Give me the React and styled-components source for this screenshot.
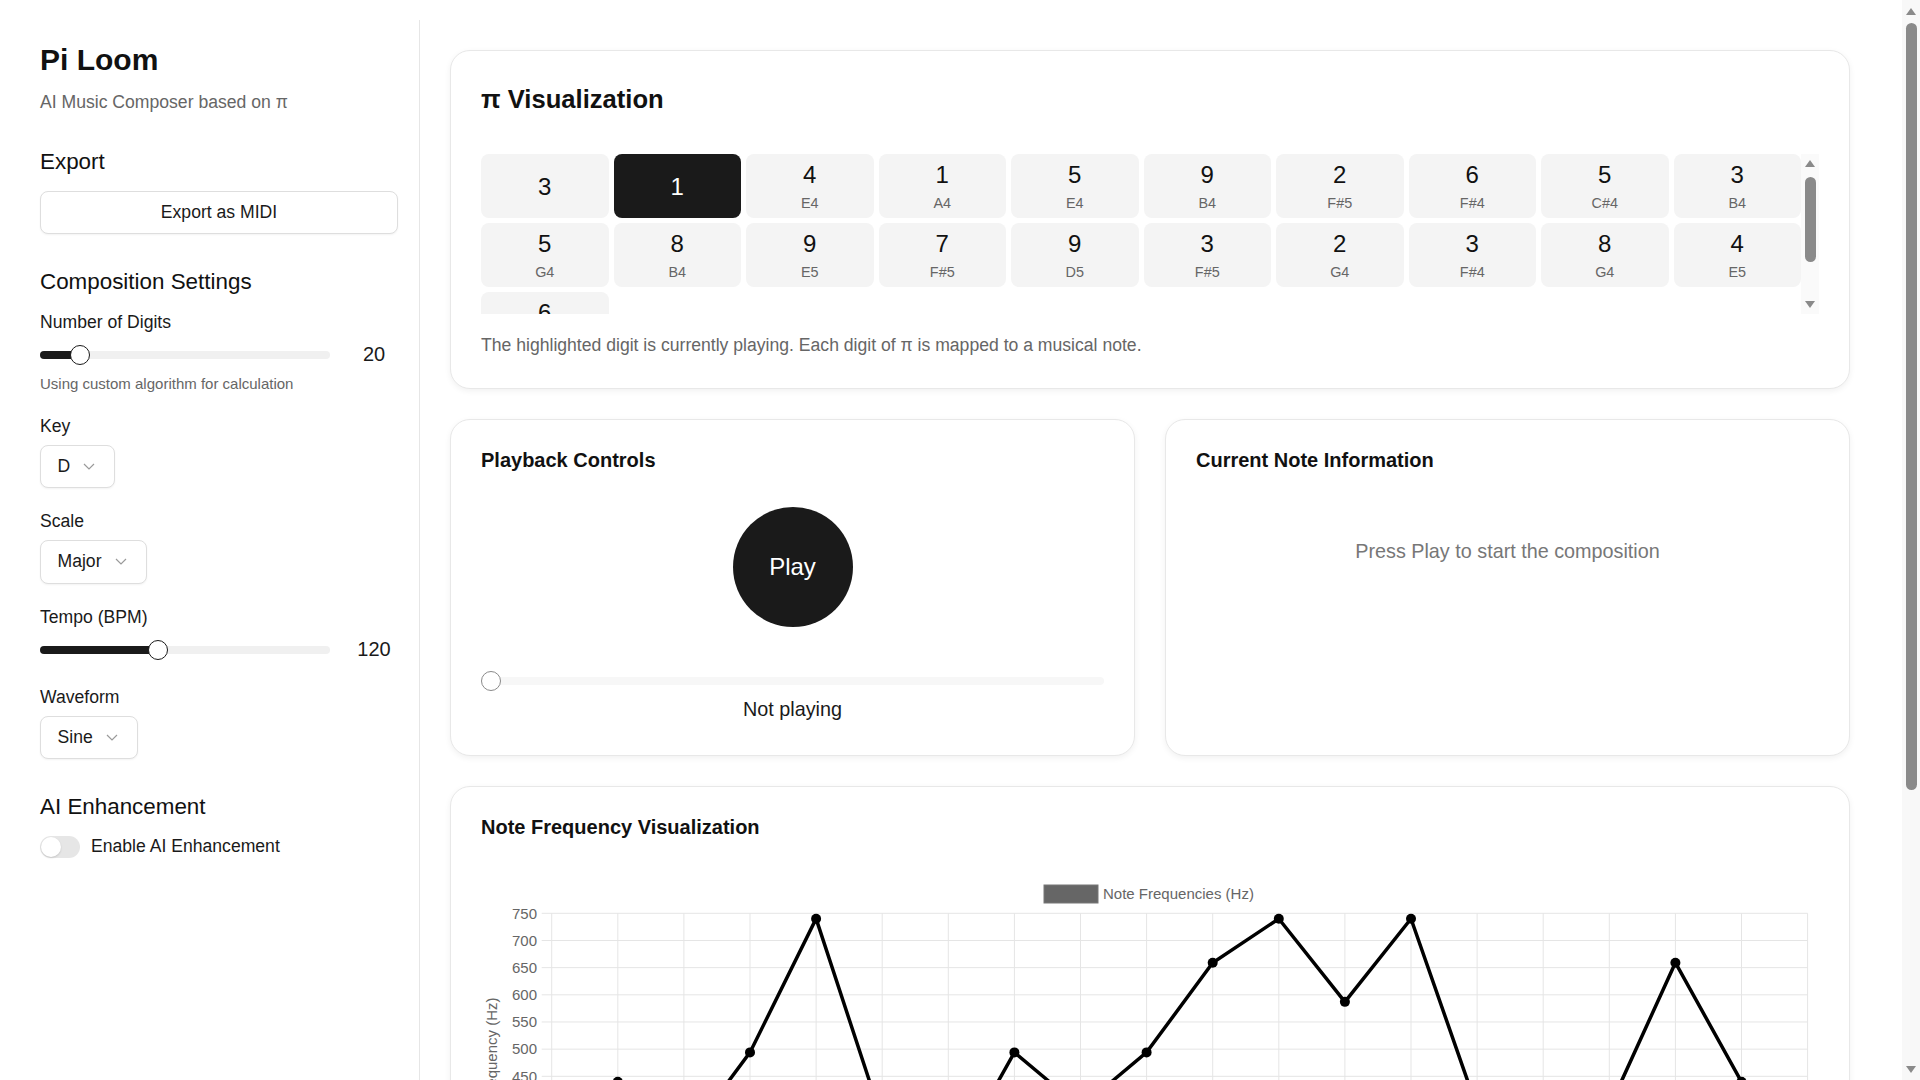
import React from 'react';
import styled, { createGlobalStyle } from 'styled-components';

const GlobalStyle = createGlobalStyle`
  html, body {
    margin: 0;
    padding: 0;
    background: #ffffff;
  }
  body {
    font-family: "Liberation Sans", Arial, sans-serif;
    font-size: 17.6px;
    color: #1a1a1a;
  }
  * {
    box-sizing: border-box;
  }
`;

const DIGITS = [
  { d: 3 },
  { d: 1, active: true },
  { d: 4, n: 'E4' },
  { d: 1, n: 'A4' },
  { d: 5, n: 'E4' },
  { d: 9, n: 'B4' },
  { d: 2, n: 'F#5' },
  { d: 6, n: 'F#4' },
  { d: 5, n: 'C#4' },
  { d: 3, n: 'B4' },
  { d: 5, n: 'G4' },
  { d: 8, n: 'B4' },
  { d: 9, n: 'E5' },
  { d: 7, n: 'F#5' },
  { d: 9, n: 'D5' },
  { d: 3, n: 'F#5' },
  { d: 2, n: 'G4' },
  { d: 3, n: 'F#4' },
  { d: 8, n: 'G4' },
  { d: 4, n: 'E5' },
  { d: 6, n: 'A4' },
];

const FREQS = [330, 440, 330, 494, 740, 370, 277, 494, 392, 494, 659, 740, 587, 740, 392, 370, 392, 659, 440, 392];

// page frame

const Page = styled.div`
  display: flex;
  align-items: flex-start;
`;

const Layout = styled.div`
  flex: 1;
  display: flex;
  padding-top: 20px;
  min-height: 100vh;
`;

// scroll rails (the reference shows classic scrollbars)

const Rail = styled.div`
  flex-shrink: 0;
  width: 18px;
  height: ${(props) => props.height};
  background: ${(props) => props.bg};
  display: flex;
  flex-direction: column;
  align-items: center;
  padding: ${(props) => props.padding};
`;

const PageRail = styled(Rail)`
  position: sticky;
  top: 0;
`;

const RailThumb = styled.div`
  width: 11px;
  border-radius: 5.5px;
  background: #8a8a8a;
`;

const RailSpacer = styled.div`
  flex: 1;
`;

const Arrow = styled.span`
  width: 0;
  height: 0;
  border-left: 5.5px solid transparent;
  border-right: 5.5px solid transparent;
  border-${(props) => (props.down ? 'top' : 'bottom')}: 7px solid #8a8a8a;
`;

function ScrollRail({ height, bg, padding, thumbTop, thumbHeight, sticky }) {
  const Comp = sticky ? PageRail : Rail;
  return (
    <Comp height={height} bg={bg} padding={padding}>
      <Arrow />
      <RailThumb style={{ marginTop: thumbTop, height: thumbHeight }} />
      <RailSpacer />
      <Arrow down />
    </Comp>
  );
}

const Sidebar = styled.aside`
  width: 420px;
  flex-shrink: 0;
  border-right: 1px solid #e6e6e6;
  padding: 21.5px 21px 40px 40px;
`;

const Main = styled.main`
  flex: 1;
  padding: 30px;
`;

const Content = styled.div`
  max-width: 1400px;
  display: flex;
  flex-direction: column;
  gap: 30px;
`;

const Row = styled.div`
  display: grid;
  grid-template-columns: 1fr 1fr;
  gap: 30px;
`;

// sidebar parts

const AppTitle = styled.h1`
  margin: 0;
  font-size: 30px;
  line-height: 36px;
  font-weight: 700;
  color: #111;
`;

const AppSubtitle = styled.p`
  margin: 13px 0 0;
  font-size: 17.6px;
  line-height: 22px;
  color: #666;
`;

const Section = styled.section`
  margin-top: ${(props) => (props.margintop ? props.margintop : '33.5px')};
  display: flex;
  flex-direction: column;
`;

const SectionTitle = styled.h2`
  margin: 0 0 15px;
  font-size: 22.4px;
  line-height: 28px;
  font-weight: 400;
  color: #111;
`;

const Groups = styled.div`
  display: flex;
  flex-direction: column;
  gap: 22px;
`;

const Group = styled.div`
  display: flex;
  flex-direction: column;
  align-items: flex-start;
  gap: 8px;
`;

const Label = styled.label`
  font-size: 17.6px;
  line-height: 22px;
`;

const Hint = styled.p`
  margin: -2px 0 0;
  font-size: 15px;
  line-height: 18px;
  color: #666;
`;

const OutlineButton = styled.button`
  width: 100%;
  height: 43.5px;
  border: 1px solid #dedede;
  border-radius: 8px;
  background: #fff;
  box-shadow: 0 1px 2px rgba(0, 0, 0, 0.05);
  font-family: inherit;
  font-size: 17.6px;
  color: #1a1a1a;
  cursor: pointer;
`;

const SelectBox = styled.div`
  display: inline-flex;
  align-items: center;
  gap: 13px;
  height: 43.5px;
  padding: 0 19px 0 16.5px;
  border: 1px solid #dedede;
  border-radius: 8px;
  background: #fff;
  box-shadow: 0 1px 2px rgba(0, 0, 0, 0.05);
  font-size: 17.6px;
  color: #1a1a1a;
`;

const SliderRow = styled.div`
  width: 100%;
  height: 28px;
  display: flex;
  align-items: center;
  gap: 20px;
`;

const Track = styled.div`
  position: relative;
  flex: 1;
  height: 8px;
  border-radius: 4px;
  background: ${(props) => (props.light ? '#f7f7f7' : '#f0f0f0')};
`;

const Fill = styled.div`
  height: 100%;
  border-radius: 4px;
  background: #1a1a1a;
`;

const Thumb = styled.div`
  position: absolute;
  top: 50%;
  width: 20px;
  height: 20px;
  margin: -10px 0 0 -10px;
  border-radius: 50%;
  background: #fff;
  border: 1.5px solid ${(props) => (props.muted ? '#8a8a8a' : '#1a1a1a')};
`;

const SliderValue = styled.span`
  width: 48px;
  text-align: center;
  font-size: 20px;
`;

const ToggleRow = styled.div`
  display: flex;
  align-items: center;
  gap: 11px;
  height: 22px;
  font-size: 17.6px;
`;

const ToggleTrack = styled.div`
  position: relative;
  width: 40px;
  height: 22px;
  border-radius: 11px;
  background: #e6e6e6;
`;

const ToggleKnob = styled.div`
  position: absolute;
  left: 1px;
  top: 1px;
  width: 20px;
  height: 20px;
  border-radius: 50%;
  background: #fff;
  box-shadow: 0 1px 2px rgba(0, 0, 0, 0.15);
`;

// cards

const Card = styled.section`
  background: #fff;
  border: 1px solid #e8e8e8;
  border-radius: 20px;
  box-shadow: 0 2px 6px rgba(0, 0, 0, 0.06);
  padding: 28px 30px 32px;
`;

const CardTitle = styled.h3`
  margin: 0;
  font-size: ${(props) => (props.big ? '25.6px' : '20px')};
  line-height: ${(props) => (props.big ? '40px' : '24px')};
  font-weight: 700;
  color: #111;
`;

const DigitScroller = styled.div`
  margin-top: 35px;
  height: 160px;
  display: flex;
`;

const DigitViewport = styled.div`
  flex: 1;
  overflow: hidden;
`;

const DigitGrid = styled.div`
  display: grid;
  grid-template-columns: repeat(10, 1fr);
  gap: 5px;
`;

const DigitCell = styled.div`
  height: 64px;
  padding-top: 2px;
  border-radius: 8px;
  display: flex;
  flex-direction: column;
  align-items: center;
  justify-content: center;
  gap: 8px;
  background: ${(props) => (props.active ? '#1a1a1a' : '#f4f4f4')};
  color: ${(props) => (props.active ? '#fff' : '#111')};
`;

const DigitValue = styled.span`
  font-size: 24px;
  line-height: 24px;
`;

const DigitNote = styled.span`
  font-size: 14.4px;
  line-height: 16px;
  color: #666;
`;

const Caption = styled.p`
  margin: 20px 0 0;
  font-size: 17.6px;
  line-height: 22px;
  color: #666;
`;

const Playback = styled.div`
  display: flex;
  flex-direction: column;
  align-items: center;
  padding-bottom: 2px;
`;

const PlayButton = styled.button`
  margin-top: 35px;
  width: 120px;
  height: 120px;
  border: none;
  border-radius: 50%;
  background: #1a1a1a;
  color: #fff;
  font-family: inherit;
  font-size: 24px;
  cursor: pointer;
`;

const Progress = styled.div`
  width: 100%;
  height: 20px;
  margin-top: 44px;
  display: flex;
  align-items: center;
`;

const Status = styled.p`
  margin: 6px 0 0;
  font-size: 19.8px;
  line-height: 24px;
`;

const Placeholder = styled.p`
  margin: 67px 0 0;
  text-align: center;
  font-size: 19.8px;
  line-height: 24px;
  color: #777;
`;

const ChartSvg = styled.svg`
  display: block;
  margin-top: 20px;
  width: 100%;
  height: 540px;
  font-family: "Liberation Sans", Arial, sans-serif;
`;

function Chevron() {
  return (
    <svg width="12" height="7" viewBox="0 0 12 7" fill="none">
      <polyline points="1,1 6,6 11,1" stroke="#9a9a9a" strokeWidth="1.2" />
    </svg>
  );
}

function Slider({ percent, value }) {
  return (
    <SliderRow>
      <Track>
        <Fill style={{ width: `${percent}%` }} />
        <Thumb style={{ left: `${percent}%` }} />
      </Track>
      <SliderValue>{value}</SliderValue>
    </SliderRow>
  );
}

function FrequencyChart() {
  const left = 70.7;
  const top = 54.3;
  const step = 66.1;
  const unit = 27.17 / 50;
  const yOf = (v) => top + (750 - v) * unit;
  const xOf = (i) => left + i * step;
  const bottom = yOf(250);
  const right = xOf(19);
  const ticks = [750, 700, 650, 600, 550, 500, 450, 400, 350, 300, 250];
  const points = FREQS.map((f, i) => `${xOf(i)},${yOf(f)}`).join(' ');

  return (
    <ChartSvg viewBox="0 0 1338 540" preserveAspectRatio="xMinYMin meet">
      <rect x="563" y="26" width="54" height="18" fill="#666" stroke="#777" strokeWidth="1" />
      <text x="622" y="40.4" fontSize="15" fill="#666">
        Note Frequencies (Hz)
      </text>

      {ticks.map((t) => (
        <g key={t}>
          <line x1={left - 10} x2={right} y1={yOf(t)} y2={yOf(t)} stroke="#e5e5e5" strokeWidth="1" />
          <text x="56" y={yOf(t) + 5.3} fontSize="15" fill="#666" textAnchor="end">
            {t}
          </text>
        </g>
      ))}
      {FREQS.map((f, i) => (
        <g key={i}>
          <line x1={xOf(i)} x2={xOf(i)} y1={top} y2={bottom + 10} stroke="#e5e5e5" strokeWidth="1" />
          <text x={xOf(i)} y={bottom + 28} fontSize="15" fill="#666" textAnchor="middle">
            {i + 1}
          </text>
        </g>
      ))}

      <text
        transform={`translate(12 ${(top + bottom) / 2}) rotate(-90)`}
        fontSize="15"
        fill="#666"
        textAnchor="middle"
        dominantBaseline="middle"
      >
        Frequency (Hz)
      </text>
      <text x={(left + right) / 2} y={bottom + 58} fontSize="15" fill="#666" textAnchor="middle">
        Digit Position
      </text>

      <polyline points={points} fill="none" stroke="#000" strokeWidth="3.5" strokeLinejoin="miter" />
      {FREQS.map((f, i) => (
        <circle key={i} cx={xOf(i)} cy={yOf(f)} r="5" fill="#000" />
      ))}
    </ChartSvg>
  );
}

export default function App() {
  return (
    <>
      <GlobalStyle />
      <Page>
        <Layout>
          <Sidebar>
            <AppTitle>Pi Loom</AppTitle>
            <AppSubtitle>AI Music Composer based on π</AppSubtitle>

            <Section margintop="35px">
              <SectionTitle>Export</SectionTitle>
              <OutlineButton>Export as MIDI</OutlineButton>
            </Section>

            <Section>
              <SectionTitle>Composition Settings</SectionTitle>
              <Groups>
                <Group>
                  <Label>Number of Digits</Label>
                  <Slider percent={13.8} value="20" />
                  <Hint>Using custom algorithm for calculation</Hint>
                </Group>
                <Group>
                  <Label>Key</Label>
                  <SelectBox>
                    D <Chevron />
                  </SelectBox>
                </Group>
                <Group>
                  <Label>Scale</Label>
                  <SelectBox>
                    Major <Chevron />
                  </SelectBox>
                </Group>
                <Group>
                  <Label>Tempo (BPM)</Label>
                  <Slider percent={40.7} value="120" />
                </Group>
                <Group>
                  <Label>Waveform</Label>
                  <SelectBox>
                    Sine <Chevron />
                  </SelectBox>
                </Group>
              </Groups>
            </Section>

            <Section>
              <SectionTitle>AI Enhancement</SectionTitle>
              <ToggleRow>
                <ToggleTrack>
                  <ToggleKnob />
                </ToggleTrack>
                Enable AI Enhancement
              </ToggleRow>
            </Section>
          </Sidebar>

          <Main>
            <Content>
              <Card>
                <CardTitle big>π Visualization</CardTitle>
                <DigitScroller>
                  <DigitViewport>
                    <DigitGrid>
                      {DIGITS.map((e, i) => (
                        <DigitCell key={i} active={e.active}>
                          <DigitValue>{e.d}</DigitValue>
                          {e.n && !e.active && <DigitNote>{e.n}</DigitNote>}
                        </DigitCell>
                      ))}
                    </DigitGrid>
                  </DigitViewport>
                  <ScrollRail height="160px" bg="#fafafa" padding="6px 0" thumbTop="9.7px" thumbHeight="85px" />
                </DigitScroller>
                <Caption>
                  The highlighted digit is currently playing. Each digit of π is mapped to a musical note.
                </Caption>
              </Card>

              <Row>
                <Card>
                  <CardTitle>Playback Controls</CardTitle>
                  <Playback>
                    <PlayButton>Play</PlayButton>
                    <Progress>
                      <Track light>
                        <Thumb muted style={{ left: '10px' }} />
                      </Track>
                    </Progress>
                    <Status>Not playing</Status>
                  </Playback>
                </Card>
                <Card>
                  <CardTitle>Current Note Information</CardTitle>
                  <Placeholder>Press Play to start the composition</Placeholder>
                </Card>
              </Row>

              <Card>
                <CardTitle>Note Frequency Visualization</CardTitle>
                <FrequencyChart />
              </Card>
            </Content>
          </Main>
        </Layout>
        <ScrollRail sticky height="100vh" bg="#f8f8f8" padding="8px 0 7px" thumbTop="8px" thumbHeight="767px" />
      </Page>
    </>
  );
}
